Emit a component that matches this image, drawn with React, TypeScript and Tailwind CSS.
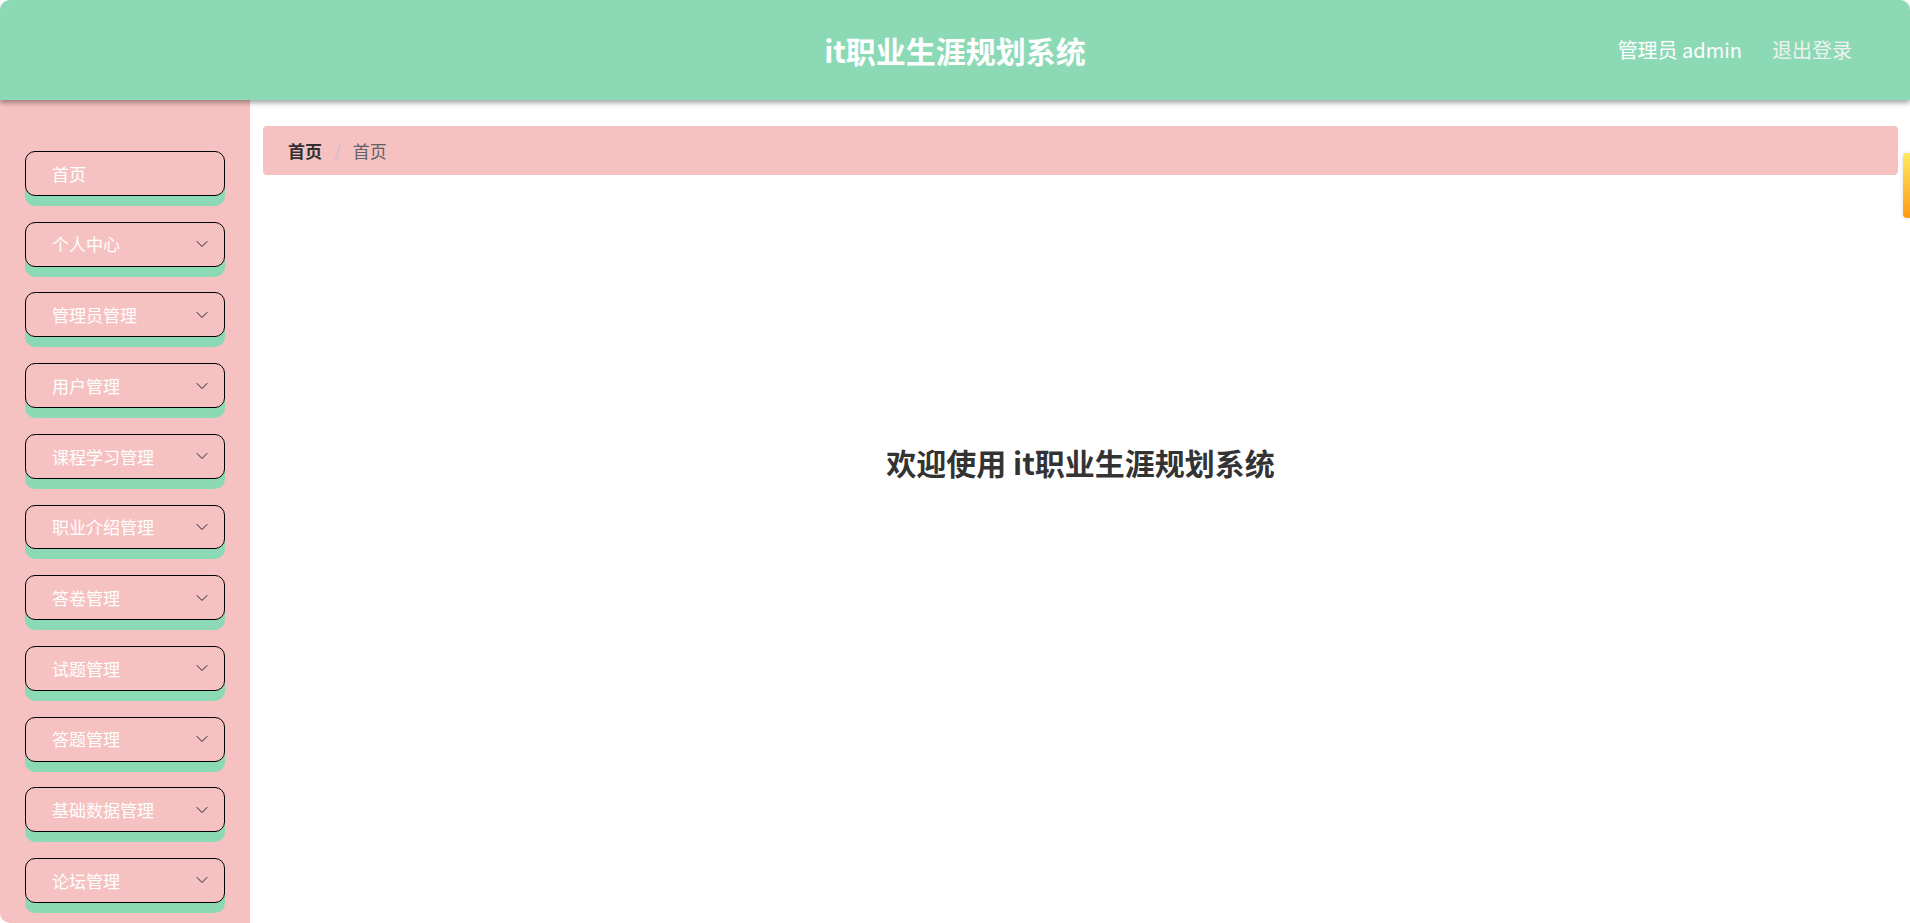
import { ChevronDown } from "lucide-react";

const menus = [
  { label: "首页", sub: false },
  { label: "个人中心", sub: true },
  { label: "管理员管理", sub: true },
  { label: "用户管理", sub: true },
  { label: "课程学习管理", sub: true },
  { label: "职业介绍管理", sub: true },
  { label: "答卷管理", sub: true },
  { label: "试题管理", sub: true },
  { label: "答题管理", sub: true },
  { label: "基础数据管理", sub: true },
  { label: "论坛管理", sub: true },
];

function Header() {
  return (
    <header className="relative z-10 grid h-[100px] grid-cols-[1fr_auto_1fr] items-center rounded-t-[10px] bg-[#8cd9b6] px-[58px] shadow-[0_3px_5px_rgba(0,0,0,0.35)]">
      <div />
      <h1 className="text-[30px] font-bold text-white">it职业生涯规划系统</h1>
      <div className="flex items-center justify-end gap-[30px] text-[20px]">
        <span className="text-white">管理员 admin</span>
        <span className="cursor-pointer text-[#eef2ef]">退出登录</span>
      </div>
    </header>
  );
}

function Sidebar() {
  return (
    <aside className="flex w-[250px] shrink-0 flex-col gap-[25.8px] rounded-bl-[10px] bg-[#f6c1c1] px-[25px] pt-[51px] pb-[20px]">
      {menus.map(item => (
        <div
          key={item.label}
          className="flex h-[45px] items-center justify-between rounded-[10px] border border-black pr-[12px] pl-[26px] text-[17px] text-white shadow-[0_10px_0_#8cd9b6]"
        >
          <span>{item.label}</span>
          {item.sub && <ChevronDown size={20} strokeWidth={1.2} className="text-[#1f2233]" />}
        </div>
      ))}
    </aside>
  );
}

export default function App() {
  return (
    <div className="relative h-[923px] overflow-hidden bg-white font-['Noto_Sans_CJK_SC','Noto_Sans',sans-serif] text-[#303133]">
      <Header />
      <div className="flex h-[823px]">
        <Sidebar />
        <main className="flex flex-1 flex-col pt-[26px] pr-[12px] pl-[13px]">
          <nav className="flex h-[49px] items-center gap-[12px] rounded-[4px] bg-[#f6c1c1] px-[25px] text-[17px]">
            <span className="font-bold text-[#303133]">首页</span>
            <span className="text-[#c0c4cc]">/</span>
            <span className="text-[#606266]">首页</span>
          </nav>
          <div className="flex flex-1 items-start justify-center pt-[265px]">
            <h2 className="text-[30px] font-bold text-[#333]">欢迎使用 it职业生涯规划系统</h2>
          </div>
        </main>
      </div>
      <div className="absolute top-[153px] right-0 h-[65px] w-[7px] rounded-l-[4px] bg-gradient-to-b from-[#ffe95c] to-[#ff9a0a] shadow-[0_0_4px_rgba(0,0,0,0.15)]" />
    </div>
  );
}
